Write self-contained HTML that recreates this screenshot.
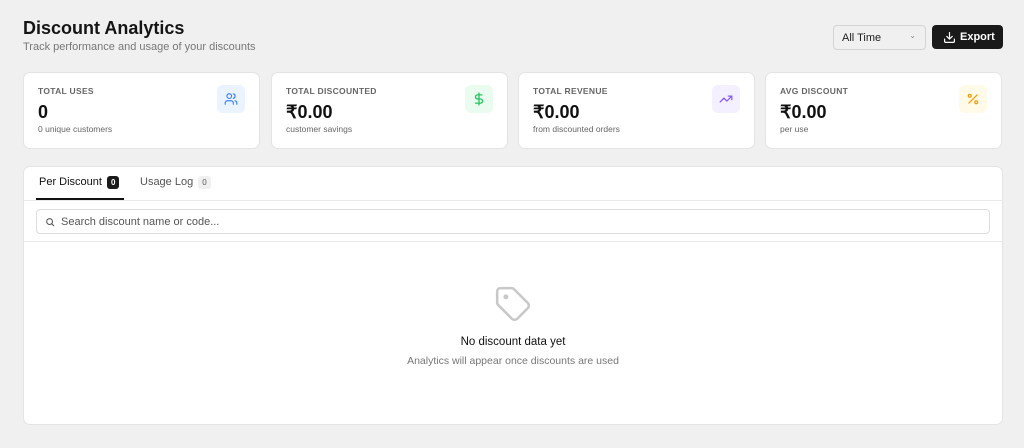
<!DOCTYPE html>
<html><head><meta charset="utf-8"><style>
*{box-sizing:border-box;margin:0;padding:0}
body{width:1024px;height:448px;background:#f0f0f0;font-family:"Liberation Sans",sans-serif;color:#111;position:relative;overflow:hidden}
.abs{position:absolute}
h1{position:absolute;left:23px;top:18px;font-size:18px;font-weight:700;color:#151515}
.sub{left:23px;top:41px;font-size:11px;color:#777}
.sel{left:833px;top:25px;width:93px;height:25px;border:1px solid #d4d4d4;border-radius:4px;background:#f0f0f0;font-size:11px;color:#222;padding:6px 8px}
.exp{left:932px;top:25px;width:71px;height:24px;background:#1a1a1a;border-radius:4px;color:#fff;font-size:11px;font-weight:700;padding:6px 0 0 28px}
.card{top:72px;height:77px;width:237px;background:#fff;border:1px solid #e4e4e4;border-radius:7px}
.card .l{position:absolute;left:14px;top:13px;font-size:8.5px;font-weight:700;color:#666;letter-spacing:.3px}
.card .v{position:absolute;left:14px;top:29px;font-size:18px;font-weight:700;color:#111}
.card .s{position:absolute;left:14px;top:51px;font-size:8.5px;color:#666}
.card .i{position:absolute;right:14px;top:12px;width:28px;height:28px;border-radius:6px;display:flex;align-items:center;justify-content:center}
.panel{left:23px;top:166px;width:980px;height:259px;background:#fff;border:1px solid #e4e4e4;border-radius:7px}
</style></head><body>
<h1>Discount Analytics</h1>
<div class="abs sub">Track performance and usage of your discounts</div>
<div class="abs sel">All Time<span style="position:absolute;right:9px;top:5px;font-size:8px;color:#888">⌄</span></div>
<div class="abs exp"><svg class="abs" style="left:11px;top:6px" width="13" height="13" viewBox="0 0 24 24" fill="none" stroke="#fff" stroke-width="2.2" stroke-linecap="round" stroke-linejoin="round"><path d="M21 15v4a2 2 0 0 1-2 2H5a2 2 0 0 1-2-2v-4M7 10l5 5 5-5M12 15V3"/></svg>Export</div>

<div class="abs card" style="left:23px"><div class="l">TOTAL USES</div><div class="v">0</div><div class="s">0 unique customers</div>
<div class="i" style="background:#ebf3ff"><svg width="14" height="14" viewBox="0 0 24 24" fill="none" stroke="#3b82f6" stroke-width="2" stroke-linecap="round"><path d="M16 21v-2a4 4 0 0 0-4-4H6a4 4 0 0 0-4 4v2"/><circle cx="9" cy="7" r="4"/><path d="M22 21v-2a4 4 0 0 0-3-3.870M16 3.13a4 4 0 0 1 0 7.75"/></svg></div></div>
<div class="abs card" style="left:271px"><div class="l">TOTAL DISCOUNTED</div><div class="v">₹0.00</div><div class="s">customer savings</div>
<div class="i" style="background:#eafbef"><svg width="14" height="14" viewBox="0 0 24 24" fill="none" stroke="#22c55e" stroke-width="2.2" stroke-linecap="round"><path d="M12 2v20M17 5H9.5a3.5 3.5 0 0 0 0 7h5a3.5 3.5 0 0 1 0 7H6"/></svg></div></div>
<div class="abs card" style="left:518px"><div class="l">TOTAL REVENUE</div><div class="v">₹0.00</div><div class="s">from discounted orders</div>
<div class="i" style="background:#f4f0ff"><svg width="14" height="14" viewBox="0 0 24 24" fill="none" stroke="#8b5cf6" stroke-width="2.2" stroke-linecap="round" stroke-linejoin="round"><path d="M22 7l-8.5 8.5-5-5L2 17M16 7h6v6"/></svg></div></div>
<div class="abs card" style="left:765px"><div class="l">AVG DISCOUNT</div><div class="v">₹0.00</div><div class="s">per use</div>
<div class="i" style="background:#fffbe8"><svg width="14" height="14" viewBox="0 0 24 24" fill="none" stroke="#f59e0b" stroke-width="2.2" stroke-linecap="round"><path d="M19 5L5 19"/><circle cx="6.5" cy="6.5" r="2.5"/><circle cx="17.5" cy="17.5" r="2.5"/></svg></div></div>

<div class="abs panel">
<div class="abs" style="left:15px;top:9px;font-size:11px;color:#111">Per Discount <span style="display:inline-block;background:#1a1a1a;color:#fff;font-size:8px;font-weight:700;border-radius:3px;padding:2px 4px;margin-left:2px">0</span></div>
<div class="abs" style="left:12px;top:31px;width:88px;height:2px;background:#111"></div>
<div class="abs" style="left:116px;top:9px;font-size:11px;color:#555">Usage Log <span style="display:inline-block;background:#f0f0f0;color:#555;font-size:8px;border-radius:3px;padding:2px 4px;margin-left:2px">0</span></div>
<div class="abs" style="left:0;top:33px;width:978px;height:1px;background:#e8e8e8"></div>
<div class="abs" style="left:12px;top:42px;width:954px;height:25px;border:1px solid #ddd;border-radius:4px;font-size:11px;color:#555;padding:6px 0 0 24px">
<svg class="abs" style="left:8px;top:7px" width="10" height="10" viewBox="0 0 24 24" fill="none" stroke="#555" stroke-width="2.5" stroke-linecap="round"><circle cx="11" cy="11" r="7"/><path d="M21 21l-4.5-4.5"/></svg>Search discount name or code...</div>
<div class="abs" style="left:0;top:74px;width:978px;height:1px;background:#e8e8e8"></div>
<svg class="abs" style="left:470px;top:118px" width="38" height="38" viewBox="0 0 24 24" fill="none" stroke="#c8c8c8" stroke-width="1.6" stroke-linecap="round" stroke-linejoin="round"><path d="M12.6 2.6A2 2 0 0 0 11.2 2H4a2 2 0 0 0-2 2v7.2a2 2 0 0 0 .6 1.4l8.7 8.7a2.4 2.4 0 0 0 3.4 0l6.6-6.6a2.4 2.4 0 0 0 0-3.4z"/><circle cx="7.5" cy="7.5" r=".8" fill="#c8c8c8"/></svg>
<div class="abs" style="left:0;width:978px;top:169px;text-align:center;font-size:11.5px;color:#111">No discount data yet</div>
<div class="abs" style="left:0;width:978px;top:188px;text-align:center;font-size:10.5px;color:#777">Analytics will appear once discounts are used</div>
</div>
</body></html>
